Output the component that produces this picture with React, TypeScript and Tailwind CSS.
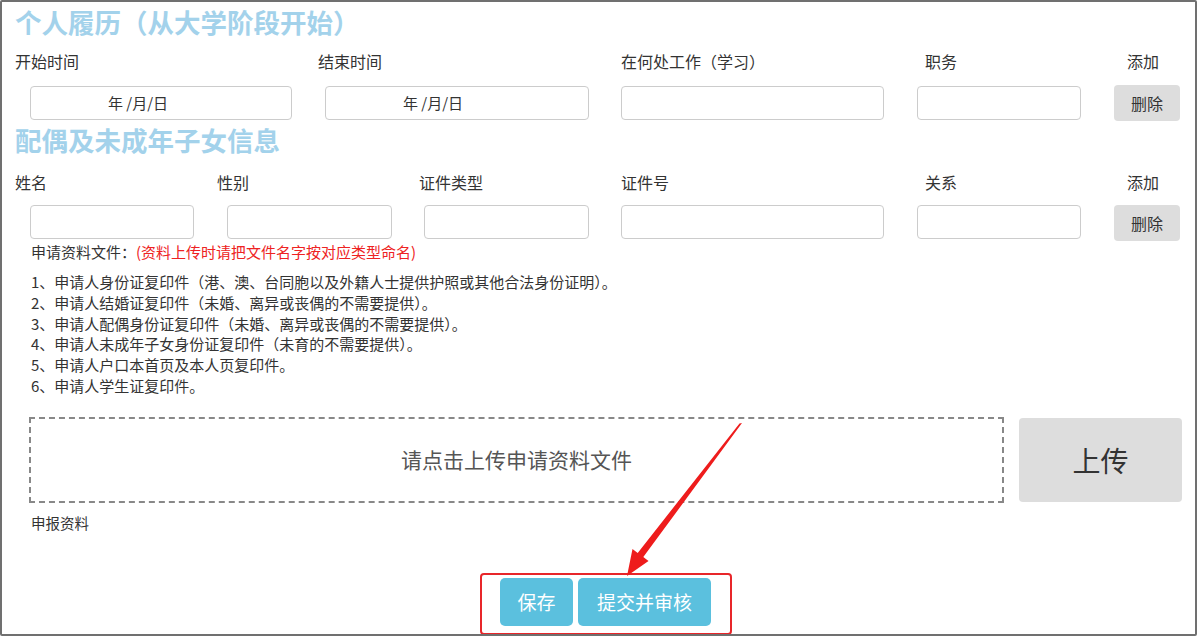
const font = { fontFamily: '"Noto Sans CJK SC", "Noto Sans", sans-serif' };

const docs = [
  '1、申请人身份证复印件（港、澳、台同胞以及外籍人士提供护照或其他合法身份证明）。',
  '2、申请人结婚证复印件（未婚、离异或丧偶的不需要提供）。',
  '3、申请人配偶身份证复印件（未婚、离异或丧偶的不需要提供）。',
  '4、申请人未成年子女身份证复印件（未育的不需要提供）。',
  '5、申请人户口本首页及本人页复印件。',
  '6、申请人学生证复印件。',
];

function Field({ w, text }: { w: string; text?: string }) {
  return (
    <div className={`${w} h-[34px] shrink-0 rounded-[4px] border border-[#cccccc] bg-white flex items-center pl-[77px] text-[15px] text-[#333]`}>
      {text}
    </div>
  );
}

function DelButton() {
  return (
    <button className="w-[66px] h-[36px] shrink-0 rounded-[4px] bg-[#dddddd] text-[16px] text-[#333]">删除</button>
  );
}

export default function App() {
  return (
    <div
      className="relative w-[1197px] h-[636px] border-2 border-[#707070] rounded-[2px] bg-white overflow-hidden"
      style={font}
    >
      {/* 个人履历 */}
      <h2 className="mt-[3px] ml-[13px] text-[26.5px] font-bold leading-[34px] text-[#a3d2eb]">
        个人履历（从大学阶段开始）
      </h2>

      <div className="mt-[10px] flex pl-[13px] text-[16px] leading-[24px] text-[#333]">
        <span className="w-[303px]">开始时间</span>
        <span className="w-[303px]">结束时间</span>
        <span className="w-[304px]">在何处工作（学习）</span>
        <span className="w-[202px]">职务</span>
        <span>添加</span>
      </div>

      <div className="mt-[12px] flex items-center pl-[28px]">
        <Field w="w-[262px]" text="年 /月/日" />
        <div className="ml-[33px]">
          <Field w="w-[264px]" text="年 /月/日" />
        </div>
        <div className="ml-[32px]">
          <Field w="w-[263px]" />
        </div>
        <div className="ml-[33px]">
          <Field w="w-[164px]" />
        </div>
        <div className="ml-[33px]">
          <DelButton />
        </div>
      </div>

      {/* 配偶及未成年子女信息 */}
      <h2 className="mt-[2px] ml-[13px] text-[26.5px] font-bold leading-[34px] text-[#a3d2eb]">
        配偶及未成年子女信息
      </h2>

      <div className="mt-[13px] flex pl-[13px] text-[16px] leading-[24px] text-[#333]">
        <span className="w-[202px]">姓名</span>
        <span className="w-[202px]">性别</span>
        <span className="w-[202px]">证件类型</span>
        <span className="w-[304px]">证件号</span>
        <span className="w-[202px]">关系</span>
        <span>添加</span>
      </div>

      <div className="mt-[11px] flex items-start pl-[28px]">
        <Field w="w-[164px]" />
        <div className="ml-[33px]">
          <Field w="w-[165px]" />
        </div>
        <div className="ml-[32px]">
          <Field w="w-[165px]" />
        </div>
        <div className="ml-[32px]">
          <Field w="w-[263px]" />
        </div>
        <div className="ml-[33px]">
          <Field w="w-[164px]" />
        </div>
        <div className="ml-[33px]">
          <DelButton />
        </div>
      </div>

      {/* 申请资料 */}
      <p className="mt-[1px] pl-[29px] text-[15px] leading-[20px] text-[#333]">
        申请资料文件：<span className="text-[#ee2222]">(资料上传时请把文件名字按对应类型命名)</span>
      </p>

      <ul className="mt-[10px] pl-[29px] text-[15px] leading-[20.8px] text-[#333]">
        {docs.map((d) => (
          <li key={d}>{d}</li>
        ))}
      </ul>

      <div className="mt-[20px] flex items-center pl-[27px]">
        <div className="w-[975px] h-[86px] shrink-0 border-2 border-dashed border-[#888888] flex items-center justify-center text-[21px] text-[#555]">
          请点击上传申请资料文件
        </div>
        <button className="ml-[15px] w-[163px] h-[84px] shrink-0 rounded-[4px] bg-[#dddddd] text-[28px] text-[#333]">
          上传
        </button>
      </div>

      <p className="mt-[10px] pl-[29px] text-[14.5px] leading-[20px] text-[#333]">申报资料</p>

      <div className="mt-[45px] flex gap-[5px] pl-[498px]">
        <button className="w-[73px] h-[48px] rounded-[5px] bg-[#5bc0de] text-[19px] text-white">保存</button>
        <button className="w-[133px] h-[48px] rounded-[5px] bg-[#5bc0de] text-[19px] text-white">提交并审核</button>
      </div>

      {/* annotation: red box + arrow */}
      <div className="absolute left-[478px] top-[571px] w-[252px] h-[62px] rounded-[4px] border-2 border-[#e8262a]" />
      <svg className="absolute left-0 top-0 pointer-events-none" width="1197" height="636" viewBox="2 2 1197 636">
        <polygon
          points="742,423 643.3,557.1 648.5,561 627,576 632.5,549 637.7,552.9 739.5,423.5"
          fill="#ee1c1c"
        />
      </svg>
    </div>
  );
}
